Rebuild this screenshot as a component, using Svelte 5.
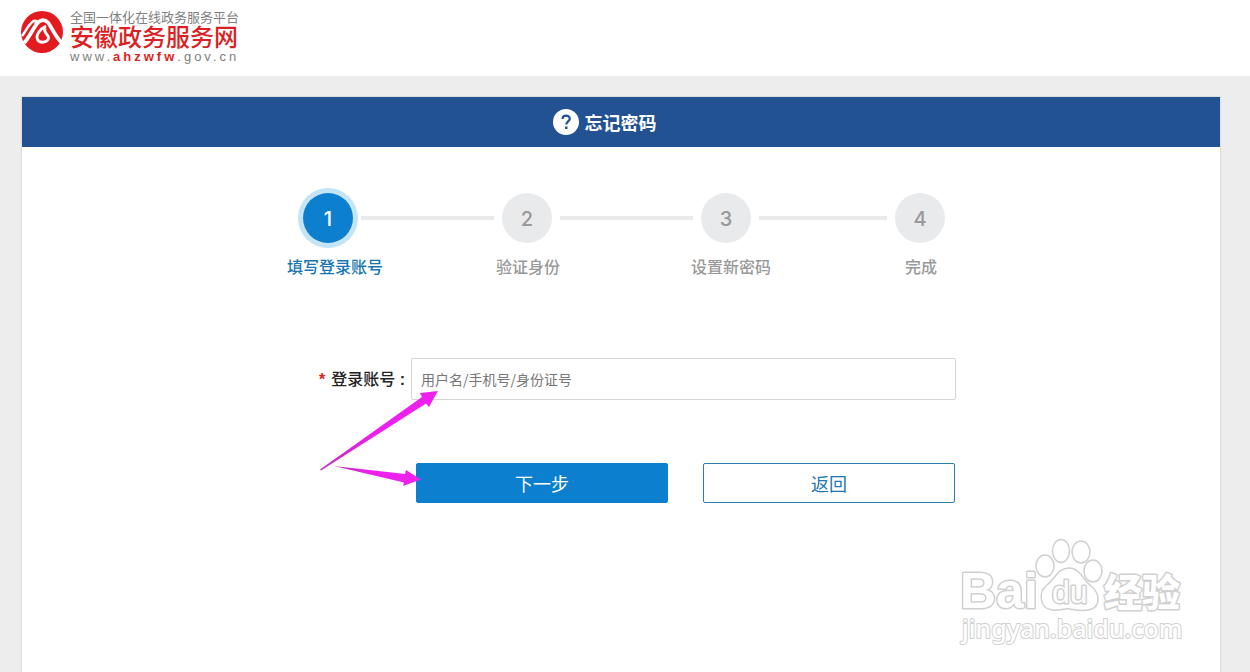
<script>
  const steps = ['填写登录账号', '验证身份', '设置新密码', '完成'];
  let current = $state(0);
  let account = $state('');
</script>

<div class="page">
  <header class="site-header">
    <a class="brand" href="#home">
      <svg class="emblem" viewBox="0 0 42 42" aria-hidden="true">
        <circle cx="21" cy="21" r="21" fill="#e31b20" />
        <g fill="none" stroke="#fff" stroke-linejoin="round">
          <path d="M1 25C5 20 7 14 12 10.500C13 9.500 15 9.500 16 10.500L14 13" stroke-width="2.500" />
          <path d="M3 32C8 27 12 17 17 11.500C20 8.500 24 8.500 27 11.500C31 17 34 25 40 31" stroke-width="3.800" />
          <path d="M25 15C19 18 14.500 24 16.500 28.500C19 33 26 31.500 27.500 27.500C28.500 23 22 23 24 17" stroke-width="2.800" />
        </g>
      </svg>
      <span class="brand-text">
        <span class="brand-top">全国一体化在线政务服务平台</span>
        <span class="brand-name">安徽政务服务网</span>
        <span class="brand-url">www.<b>ahzwfw</b>.gov.cn</span>
      </span>
    </a>
  </header>

  <main class="panel">
    <h1 class="title">
      <svg class="help" viewBox="0 0 26 26" aria-hidden="true">
        <circle cx="13" cy="13" r="13" fill="#fff" />
        <path d="M9.500 10C9.500 5.500 16.800 5.500 16.800 9.800C16.800 12.400 13.300 12.500 13.300 15.500" fill="none" stroke="#235293" stroke-width="2.200" />
        <rect x="12" y="17.500" width="2.500" height="2.500" fill="#235293" />
      </svg>
      忘记密码
    </h1>

    <div class="content">
      <div class="track">
        {#each steps as step, i}
          <div class="stop">
            <span class="dot" class:active={i === current}>{i + 1}</span>
            {#if i < steps.length - 1}<span class="line"></span>{/if}
          </div>
        {/each}
      </div>
      <ol class="labels">
        {#each steps as step, i}
          <li class:active={i === current}>{step}</li>
        {/each}
      </ol>

      <form onsubmit={(e) => e.preventDefault()}>
        <div class="field">
          <label for="account"><span class="required">*</span>登录账号 <b>:</b></label>
          <input id="account" type="text" placeholder="用户名/手机号/身份证号" bind:value={account} />
        </div>
        <div class="actions">
          <button class="primary" type="submit">下一步</button>
          <button class="secondary" type="button">返回</button>
        </div>
        <svg class="arrows" viewBox="0 0 124 104" aria-hidden="true">
          <defs>
            <linearGradient id="shaft" x1="0" x2="1">
              <stop offset="0" stop-color="#b833b8" />
              <stop offset="0.450" stop-color="#ee20ee" />
            </linearGradient>
          </defs>
          <path fill="url(#shaft)" d="M1 79.500L103 7L101 3L119 1L110 17L107 13.500L2 80.500Z" />
          <path fill="url(#shaft)" d="M15 76L86 84L87 80L102 89.500L84 96L85 92.500Z" />
        </svg>
      </form>
    </div>

    <svg class="watermark" viewBox="0 0 230 112" aria-hidden="true">
      <g fill="#fff" stroke="#d0d0d0" stroke-width="1.500">
        <text class="bai" x="3" y="72">Bai</text>
        <ellipse cx="88" cy="30" rx="9" ry="11" />
        <ellipse cx="104" cy="15" rx="8.500" ry="11.500" />
        <ellipse cx="124" cy="16" rx="9" ry="11" />
        <ellipse cx="136" cy="35" rx="9" ry="11" />
        <path d="M112 32C101 32 98 43 90 49C81 56 82 73 96 74C103 75 107 72 113 73C120 74 128 76 135 73C144 69 142 56 134 50C126 44 123 32 112 32Z" />
        <text class="du" x="95" y="67">du</text>
        <text class="jy" x="147" y="70">经验</text>
        <text class="domain" x="5" y="102">jingyan.baidu.com</text>
      </g>
    </svg>
  </main>
</div>

<style>
  :global(body) {
    margin: 0;
    background: #ededed;
  }

  .page {
    box-sizing: border-box;
    min-height: 100vh;
    display: flex;
    flex-direction: column;
    font-family: "Liberation Sans", "Noto Sans CJK SC", sans-serif;
    color: #222;
  }

  .site-header {
    background: #fff;
    padding: 11px 21px 12px;
  }

  .brand {
    display: inline-flex;
    gap: 7px;
    color: #808080;
    text-decoration: none;
    vertical-align: top;
  }

  .emblem {
    width: 42px;
    height: 42px;
  }

  .brand-text {
    display: flex;
    flex-direction: column;
  }

  .brand-top {
    font-size: 13px;
    line-height: 14px;
  }

  .brand-name {
    font-size: 24px;
    line-height: 25px;
    font-weight: 500;
    color: #dc1f24;
  }

  .brand-url {
    font-size: 13px;
    line-height: 14px;
    letter-spacing: 3px;
  }

  .brand-url b {
    color: #dc1f24;
  }

  .panel {
    position: relative;
    flex: 1;
    margin: 20px 29px 0 21px;
    background: #fff;
    border: 1px solid #dcdcdc;
    border-bottom: 0;
  }

  .title {
    display: flex;
    align-items: center;
    justify-content: center;
    gap: 6px;
    height: 50px;
    margin: 0;
    padding-right: 33px;
    background: #235293;
    color: #fff;
    font-size: 18px;
    font-weight: 700;
  }

  .help {
    width: 26px;
    height: 26px;
  }

  .content {
    max-width: 670px;
    margin: 0 auto;
    padding: 46px 0 168px;
  }

  .track {
    display: grid;
    grid-template-columns: 199fr 199fr 194fr 50px;
    padding: 0 11px 0 17px;
  }

  .stop {
    display: flex;
    align-items: center;
  }

  .dot {
    flex: none;
    width: 50px;
    height: 50px;
    border-radius: 50%;
    background: #e9eaec;
    color: #999;
    font: 500 20px/52px Inter, sans-serif;
    text-align: center;
  }

  .dot.active {
    background: #0c7fcf;
    color: #fff;
    box-shadow: 0 0 0 5px #c5e4f5;
  }

  .line {
    flex: 1;
    height: 4px;
    margin: 0 8px;
    background: #e9eaec;
  }

  .labels {
    display: grid;
    grid-template-columns: 209fr 195fr 214fr 51px;
    margin: 13px 0 0;
    padding: 0 0 0 1px;
    list-style: none;
    font-size: 16px;
    line-height: 24px;
    font-weight: 500;
    color: #999;
    white-space: nowrap;
  }

  .labels .active {
    color: #1877b2;
  }

  form {
    position: relative;
    margin: 78px 0 0 33px;
  }

  .field {
    display: flex;
    align-items: center;
  }

  label {
    flex: none;
    width: 92px;
    padding-bottom: 3px;
    font-size: 16px;
    font-weight: 500;
    white-space: nowrap;
  }

  .required {
    margin-right: 6px;
    color: #e02020;
    font-weight: 700;
  }

  input {
    box-sizing: border-box;
    flex: 1;
    min-width: 0;
    height: 42px;
    padding: 0 9px;
    border: 1px solid #d6d6d6;
    border-radius: 2px;
    font: 14px "Noto Sans CJK SC", sans-serif;
    color: #333;
  }

  input::placeholder {
    color: #777;
  }

  .actions {
    display: grid;
    grid-template-columns: 1fr 1fr;
    gap: 35px;
    margin: 63px 1px 0 97px;
  }

  button {
    height: 40px;
    padding: 0;
    border: 1px solid #0c7fcf;
    border-radius: 2px;
    font: 18px "Noto Sans CJK SC", sans-serif;
    cursor: pointer;
  }

  .primary {
    background: #0c7fcf;
    color: #fff;
  }

  .secondary {
    background: #fff;
    border-color: #2a7fa8;
    color: #2376b5;
  }

  .arrows {
    position: absolute;
    left: 0;
    top: 32px;
    width: 124px;
    height: 104px;
    pointer-events: none;
  }

  .watermark {
    position: absolute;
    right: 33px;
    top: 439px;
    width: 230px;
    height: 112px;
    pointer-events: none;
  }

  .watermark text {
    paint-order: stroke;
    stroke-width: 3px;
    stroke-linejoin: round;
  }

  .watermark .bai {
    font: 700 50px "Liberation Sans", sans-serif;
  }

  .watermark .du {
    font: 32px "Liberation Sans", sans-serif;
  }

  .watermark .jy {
    font: 900 38px "Noto Sans CJK SC", sans-serif;
  }

  .watermark .domain {
    font: 500 25px "Noto Sans", sans-serif;
    stroke-width: 2px;
  }
</style>
